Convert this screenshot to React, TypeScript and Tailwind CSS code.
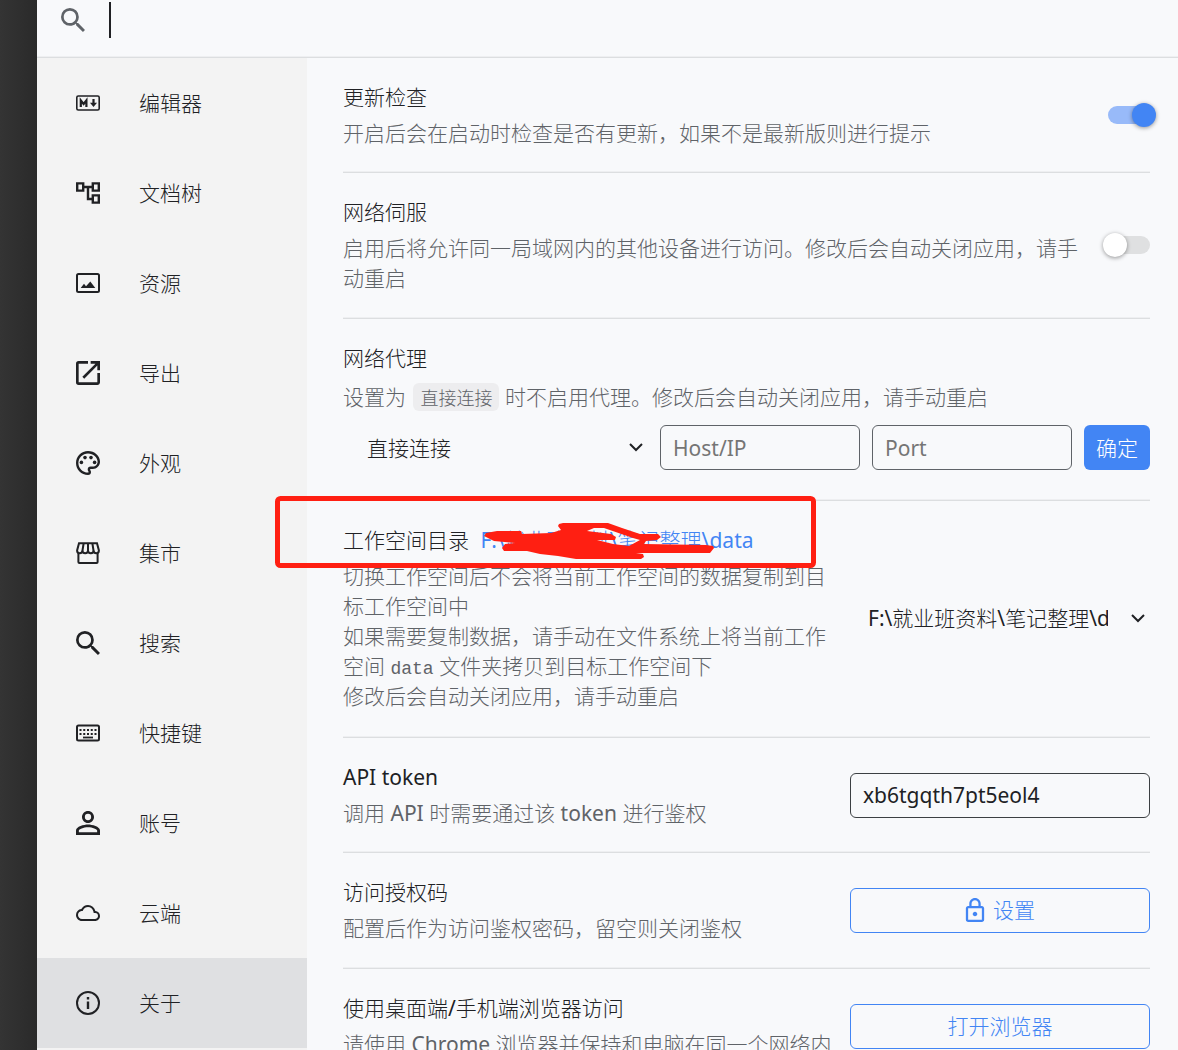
import React, { useState } from "react";
import clsx from "clsx";

const WORKSPACE = "F:\\就业班资料\\笔记整理\\data";

const SearchIcon = () => (
  <svg className="size-6" viewBox="3 3 17.5 17.5" fill="currentColor" aria-hidden="true">
    <path d="M15.5 14h-.79l-.28-.27A6.471 6.471 0 0 0 16 9.5 6.5 6.5 0 1 0 9.5 16c1.61 0 3.09-.59 4.23-1.57l.27.28v.79l5 4.99L20.49 19l-4.99-5zm-6 0C7.01 14 5 11.99 5 9.5S7.01 5 9.5 5 14 7.01 14 9.5 11.99 14 9.5 14z" />
  </svg>
);

const MarkdownIcon = () => (
  <svg className="size-6" viewBox="0 0 24 24" fill="none" stroke="currentColor" aria-hidden="true">
    <rect x="0.8" y="5" width="22.4" height="14" rx="1.5" strokeWidth="1.6" />
    <path d="M4.8 16V9.5l2.8 3.5 2.8-3.5V16" strokeWidth="2.2" />
    <path d="M17.5 8v5" strokeWidth="2.2" />
    <path d="M14 11.8h7l-3.5 4.2z" fill="currentColor" stroke="none" />
  </svg>
);

const TreeIcon = () => (
  <svg className="size-6" viewBox="2 2 20 20" fill="currentColor" aria-hidden="true">
    <path d="M22 11V3h-7v3H9V3H2v8h7V8h2v10h4v3h7v-8h-7v3h-2V8h2v3h7zM7 9H4V5h3v4zm10 6h3v4h-3v-4zm0-10h3v4h-3V5z" />
  </svg>
);

const ImageIcon = () => (
  <svg className="size-6" viewBox="0 0 24 24" fill="none" stroke="currentColor" aria-hidden="true">
    <rect x="1" y="3" width="22" height="18" rx="1.5" strokeWidth="2" />
    <path d="M4.7 17 8 12.8l2 2.4 4.3-4.7 5 6.5z" fill="currentColor" stroke="none" />
  </svg>
);

const ExportIcon = () => (
  <svg className="size-6" viewBox="3 3 18 18" fill="currentColor" aria-hidden="true">
    <path d="M19 19H5V5h7V3H5a2 2 0 0 0-2 2v14a2 2 0 0 0 2 2h14c1.1 0 2-.9 2-2v-7h-2v7zM14 3v2h3.59l-9.83 9.83 1.41 1.41L19 6.41V10h2V3h-7z" />
  </svg>
);

const PaletteIcon = () => (
  <svg className="size-6" viewBox="2 2 20 20" fill="currentColor" aria-hidden="true">
    <path d="M12 22C6.49 22 2 17.51 2 12S6.49 2 12 2s10 4.04 10 9c0 3.31-2.69 6-6 6h-1.77c-.28 0-.5.22-.5.5 0 .12.05.23.13.33.41.47.64 1.06.64 1.67A2.5 2.5 0 0 1 12 22zm0-18c-4.41 0-8 3.59-8 8s3.59 8 8 8c.28 0 .5-.22.5-.5a.54.54 0 0 0-.14-.35c-.41-.46-.63-1.05-.63-1.65a2.5 2.5 0 0 1 2.5-2.5H16c2.21 0 4-1.79 4-4 0-3.86-3.59-7-8-7z" />
    <circle cx="6.5" cy="11.5" r="1.5" />
    <circle cx="9.5" cy="7.5" r="1.5" />
    <circle cx="14.5" cy="7.5" r="1.5" />
    <circle cx="17.5" cy="11.5" r="1.5" />
  </svg>
);

const StoreIcon = () => (
  <svg className="size-6" viewBox="0 0 24 24" fill="none" stroke="currentColor" strokeWidth="2" aria-hidden="true">
    <path d="M3 2.2h18l1.9 7.2c0 1.7-1.1 2.8-2.6 2.8s-2.7-1.200-2.7-2.600c0 1.400-1.200 2.600-2.800 2.600S12 11 12 9.600c0 1.400-1.200 2.600-2.800 2.600S6.400 11 6.400 9.600c0 1.400-1.200 2.600-2.700 2.600S1.100 11.100 1.100 9.400z" />
    <path d="M7.600 2.500 6.400 10M12 2.500V10M16.400 2.500 17.600 10" />
    <path d="M2.400 12v9c0 .6.400 1 1 1h17.200c.6 0 1-.4 1-1v-9" />
  </svg>
);

const KeyboardIcon = () => (
  <svg className="size-6" viewBox="0 0 24 24" fill="none" stroke="currentColor" aria-hidden="true">
    <rect x="1" y="4.5" width="22" height="15" rx="1.5" strokeWidth="2" />
    <path d="M3.5 9h17M3.5 13h17" strokeWidth="2" strokeDasharray="2 1.75" />
    <path d="M7 16.5h10" strokeWidth="1.8" />
  </svg>
);

const PersonIcon = () => (
  <svg className="size-6" viewBox="4 4 16 16" fill="currentColor" aria-hidden="true">
    <path d="M12 5.9a2.1 2.1 0 1 1 0 4.2 2.1 2.1 0 0 1 0-4.2m0 9c2.97 0 6.1 1.46 6.1 2.1v1.1H5.9V17c0-.64 3.13-2.1 6.1-2.1M12 4C9.79 4 8 5.79 8 8s1.79 4 4 4 4-1.79 4-4-1.79-4-4-4zm0 9c-2.67 0-8 1.34-8 4v3h16v-3c0-2.66-5.33-4-8-4z" />
  </svg>
);

const CloudIcon = () => (
  <svg className="size-6" viewBox="0 0 24 24" fill="currentColor" aria-hidden="true">
    <path d="M19.35 10.04A7.49 7.49 0 0 0 12 4C9.11 4 6.6 5.64 5.35 8.04A5.994 5.994 0 0 0 0 14c0 3.31 2.69 6 6 6h13c2.76 0 5-2.24 5-5 0-2.64-2.05-4.78-4.65-4.96zM19 18H6c-2.21 0-4-1.79-4-4 0-2.05 1.53-3.76 3.56-3.97l1.07-.11.5-.95A5.469 5.469 0 0 1 12 6c2.62 0 4.88 1.86 5.39 4.43l.3 1.5 1.53.11A2.98 2.98 0 0 1 22 15c0 1.65-1.35 3-3 3z" />
  </svg>
);

const InfoIcon = () => (
  <svg className="size-6" viewBox="0 0 24 24" fill="none" stroke="currentColor" aria-hidden="true">
    <circle cx="12" cy="12" r="11" strokeWidth="2" />
    <path d="M12 6v2.5M12 10.5V18" strokeWidth="2.4" />
  </svg>
);

const LockIcon = () => (
  <svg className="h-6 w-5" viewBox="4 1 16 21" fill="currentColor" aria-hidden="true">
    <path d="M18 8h-1V6c0-2.76-2.24-5-5-5S7 3.24 7 6v2H6c-1.1 0-2 .9-2 2v10c0 1.1.9 2 2 2h12c1.1 0 2-.9 2-2V10c0-1.1-.9-2-2-2zM9 6c0-1.66 1.34-3 3-3s3 1.34 3 3v2H9V6zm9 14H6V10h12v10zm-6-3c1.1 0 2-.9 2-2s-.9-2-2-2-2 .9-2 2 .9 2 2 2z" />
  </svg>
);

const menu = [
  { label: "编辑器", icon: MarkdownIcon },
  { label: "文档树", icon: TreeIcon },
  { label: "资源", icon: ImageIcon },
  { label: "导出", icon: ExportIcon },
  { label: "外观", icon: PaletteIcon },
  { label: "集市", icon: StoreIcon },
  { label: "搜索", icon: SearchIcon },
  { label: "快捷键", icon: KeyboardIcon },
  { label: "账号", icon: PersonIcon },
  { label: "云端", icon: CloudIcon },
  { label: "关于", icon: InfoIcon },
];

const inputClass =
  "h-[45px] rounded-md border px-3 text-[#202124] placeholder:text-[#757575] outline-none";
const outlineButton =
  "flex h-[45px] w-[300px] shrink-0 items-center justify-center gap-2 rounded-md border border-[#4285f4] text-[#4285f4]";

function Row({ children, className = "pb-6" }: { children: React.ReactNode; className?: string }) {
  return (
    <div
      className={clsx(
        "relative flex items-center gap-3 border-b border-[#dcdee0] pt-6 shadow-[inset_0_-1px_#eeeff1]",
        className
      )}
    >
      {children}
    </div>
  );
}

function Info({
  title,
  htmlFor,
  children,
}: {
  title: React.ReactNode;
  htmlFor?: string;
  children: React.ReactNode;
}) {
  return (
    <div className="min-w-0 flex-1">
      {htmlFor ? (
        <label htmlFor={htmlFor} className="block">
          {title}
        </label>
      ) : (
        <div>{title}</div>
      )}
      <div className="mt-1.5 text-[#5f6368]">{children}</div>
    </div>
  );
}

function Switch({ id, defaultChecked }: { id: string; defaultChecked?: boolean }) {
  return (
    <input
      id={id}
      type="checkbox"
      role="switch"
      defaultChecked={defaultChecked}
      className="relative h-[18px] w-[42px] shrink-0 appearance-none rounded-full bg-[#dfe0e1] before:absolute before:-top-[3px] before:-left-[5px] before:size-6 before:rounded-full before:bg-white before:shadow-[0_1px_4px_rgba(0,0,0,0.4)] checked:bg-[#98baf9] checked:before:left-6 checked:before:bg-[#4285f4]"
    />
  );
}

function Select({
  label,
  value,
  className,
}: {
  label: string;
  value: string;
  className?: string;
}) {
  return (
    <div className={clsx("relative", className)}>
      <select
        aria-label={label}
        className="h-[45px] w-full appearance-none bg-transparent pr-[42px] pl-[18px] outline-none"
      >
        <option>{value}</option>
      </select>
      <svg
        className="pointer-events-none absolute top-4 right-1 h-3 w-4"
        viewBox="0 0 16 12"
        fill="none"
        stroke="currentColor"
        strokeWidth="2"
        aria-hidden="true"
      >
        <path d="M2 3l6 6 6-6" />
      </svg>
    </div>
  );
}

// Hand-drawn marker: a frame round the path and a scribble over part of it
function Marker() {
  return (
    <svg
      className="pointer-events-none absolute -top-[5px] -left-[68px] h-[72px] w-[541px]"
      viewBox="0 0 541 72"
      aria-hidden="true"
    >
      <rect x="2.5" y="2.5" width="536" height="67" rx="3" fill="none" stroke="#ff1f12" strokeWidth="5" />
      <path
        fill="#ff1f12"
        fillRule="evenodd"
        d="M209 40L211 37 222 35H246L247 38 276 37 286 34 283 30 284 28 288 27H333L347 32 365 38H383L386 41 382 44 371 45 369 48 431 49 438 50 439 52 435 57H361L368 58 369 61 366 63H301L283 60 265 58 252 55H229L227 52 230 48 240 47 219 45zM312 35L319 32H329L358 42 365 44 354 50 338 48 322 44H340L341 41 336 38z"
      />
    </svg>
  );
}

function App() {
  const [active, setActive] = useState("关于");

  return (
    <div
      lang="zh-CN"
      className="flex h-screen overflow-hidden bg-[#f8f9fb] font-['Noto_Sans','Noto_Sans_CJK_SC_Light','Noto_Sans_CJK_SC',sans-serif] text-[21px] leading-[30px] text-[#202124]"
    >
      <div className="w-[37px] shrink-0 bg-linear-to-r from-[#343434] to-[#2a2a2a]" />

      <div className="flex min-w-0 flex-1 flex-col">
        {/* Search bar */}
        <header className="flex h-[58px] shrink-0 items-center border-b border-[#dcdee0] pb-[17px] pl-6 text-[#5f6368] shadow-[inset_0_-1px_#eeeff1]">
          <SearchIcon />
          <span className="ml-6 h-9 w-0.5 bg-[#202124]" />
          <input aria-label="搜索" className="h-10 min-w-0 flex-1 outline-none" />
        </header>

        <div className="flex min-h-0 flex-1">
          {/* Menu */}
          <nav className="w-[270px] shrink-0 bg-[#f3f3f3]">
            {menu.map(({ label, icon: Icon }) => (
              <button
                key={label}
                onClick={() => setActive(label)}
                className={clsx(
                  "flex h-[90px] w-full items-center gap-[39px] pl-[39px] text-left",
                  active === label && "bg-[#dfe0e2]"
                )}
              >
                <Icon />
                {label}
              </button>
            ))}
          </nav>

          {/* Settings */}
          <main className="min-w-0 flex-1 pr-7 pl-9">
            <Row>
              <Info title="更新检查" htmlFor="update">
                开启后会在启动时检查是否有更新，如果不是最新版则进行提示
              </Info>
              <Switch id="update" defaultChecked />
            </Row>

            <Row className="pb-[25px]">
              <Info title="网络伺服" htmlFor="serve">
                启用后将允许同一局域网内的其他设备进行访问。修改后会自动关闭应用，请手动重启
              </Info>
              <Switch id="serve" />
            </Row>

            <Row className="pb-[30px]">
              <div className="min-w-0 flex-1">
                <div>网络代理</div>
                <div className="mt-1.5 leading-9 text-[#5f6368]">
                  设置为{" "}
                  <code className="ml-0.5 rounded-md bg-[#ededef] px-[7px] py-px font-['Noto_Sans_CJK_SC_Light','Noto_Sans_CJK_SC',sans-serif] text-lg">
                    直接连接
                  </code>{" "}
                  时不启用代理。修改后会自动关闭应用，请手动重启
                </div>
                <div className="mt-2.5 flex gap-3">
                  <Select label="网络代理" value="直接连接" className="ml-1.5 min-w-0 flex-1" />
                  <input
                    aria-label="Host/IP"
                    placeholder="Host/IP"
                    className={clsx(inputClass, "w-[200px] border-[#5f6368]")}
                  />
                  <input
                    aria-label="Port"
                    placeholder="Port"
                    className={clsx(inputClass, "w-[200px] border-[#5f6368]")}
                  />
                  <button className="h-[45px] w-[66px] rounded-md bg-[#4285f4] text-white">确定</button>
                </div>
              </div>
            </Row>

            <Row className="pb-[26px]">
              <Info
                title={
                  <>
                    工作空间目录{" "}
                    <a href="#workspace" className="ml-1.5 text-[#4285f4]">
                      {WORKSPACE}
                    </a>
                  </>
                }
              >
                <p>切换工作空间后不会将当前工作空间的数据复制到目标工作空间中</p>
                <p>
                  如果需要复制数据，请手动在文件系统上将当前工作空间{" "}
                  <code className="font-['Liberation_Mono',monospace] text-lg leading-none">data</code>{" "}
                  文件夹拷贝到目标工作空间下
                </p>
                <p>修改后会自动关闭应用，请手动重启</p>
              </Info>
              <Select label="工作空间目录" value={WORKSPACE} className="w-[300px] shrink-0" />
              <Marker />
            </Row>

            <Row>
              <Info title="API token" htmlFor="token">
                调用 API 时需要通过该 token 进行鉴权
              </Info>
              <input
                id="token"
                defaultValue="xb6tgqth7pt5eol4"
                className={clsx(inputClass, "w-[300px] shrink-0 border-[#3c4043]")}
              />
            </Row>

            <Row className="pb-[25px]">
              <Info title="访问授权码">配置后作为访问鉴权密码，留空则关闭鉴权</Info>
              <button className={outlineButton}>
                <LockIcon />
                设置
              </button>
            </Row>

            <Row>
              <Info title="使用桌面端/手机端浏览器访问">
                请使用 Chrome 浏览器并保持和电脑在同一个网络内
              </Info>
              <button className={outlineButton}>打开浏览器</button>
            </Row>
          </main>
        </div>
      </div>
    </div>
  );
}

export default App;
